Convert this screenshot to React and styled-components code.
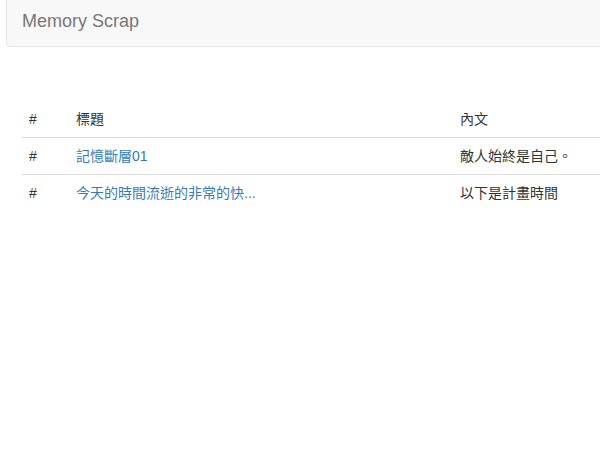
import React from "react";
import styled, { createGlobalStyle } from "styled-components";

const GlobalStyle = createGlobalStyle`
  html, body {
    margin: 0;
    padding: 0;
    background: #fff;
    overflow: hidden;
  }
  body {
    font-family: "Liberation Sans", "Noto Sans CJK TC", sans-serif;
    font-size: 14px;
    line-height: 1.42857;
    color: #333;
  }
`;

const Page = styled.div`
  width: 100%;
  overflow: hidden;
`;

const Navbar = styled.nav`
  margin: -5px -20px 0 6px;
  min-height: 50px;
  background-color: #f8f8f8;
  border: 1px solid #e7e7e7;
  border-radius: 4px;
  display: flex;
  align-items: center;
`;

const Brand = styled.a`
  padding: 15px;
  font-size: 18px;
  line-height: 20px;
  color: #777;
  text-decoration: none;
`;

const Content = styled.div`
  padding: 54px 0 0 21px;
`;

const Table = styled.table`
  width: 1150px;
  border-collapse: collapse;
  border-spacing: 0;
`;

const Th = styled.th`
  text-align: left;
  font-weight: normal;
  padding: 8px;
  line-height: 20px;
  width: ${(p) => p.$w || "auto"};
`;

const Td = styled.td`
  padding: 8px;
  line-height: 20px;
  border-top: 1px solid #ddd;
  vertical-align: top;
`;

const Link = styled.a`
  color: #337ab7;
  text-decoration: none;
`;

const rows = [
  { title: "記憶斷層01", body: "敵人始終是自己。" },
  { title: "今天的時間流逝的非常的快...", body: "以下是計畫時間" },
];

export default function App() {
  return (
    <Page>
      <GlobalStyle />
      <Navbar>
        <Brand href="#">Memory Scrap</Brand>
      </Navbar>
      <Content>
        <Table>
          <thead>
            <tr>
              <Th $w="31px">#</Th>
              <Th $w="368px">標題</Th>
              <Th>內文</Th>
            </tr>
          </thead>
          <tbody>
            {rows.map((r, i) => (
              <tr key={i}>
                <Td>#</Td>
                <Td>
                  <Link href="#">{r.title}</Link>
                </Td>
                <Td>{r.body}</Td>
              </tr>
            ))}
          </tbody>
        </Table>
      </Content>
    </Page>
  );
}
